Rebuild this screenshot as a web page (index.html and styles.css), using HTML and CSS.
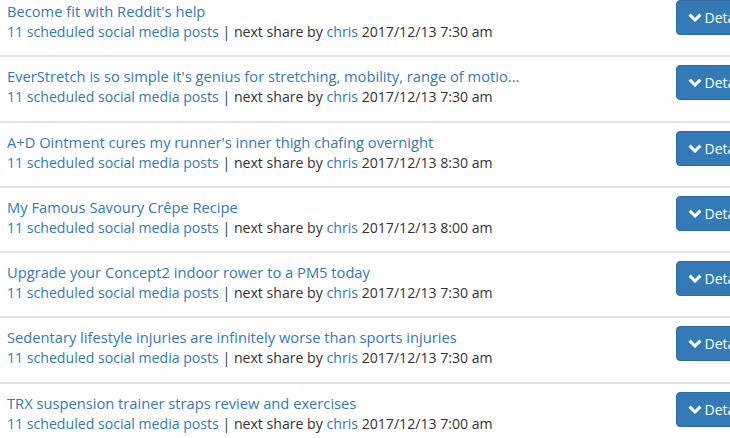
FILE: index.html
```html
<!DOCTYPE html>
<html>
<head>
<meta charset="utf-8">
<link rel="stylesheet" href="styles.css">
</head>
<body>
<div class="list">
  <div class="row">
    <div class="info">
      <a class="title" href="#">Become fit with Reddit's help</a>
      <div class="meta"><a href="#">11 scheduled social media posts</a> | next share by <a href="#">chris</a> 2017/12/13 7:30 am</div>
    </div>
    <button class="btn"><svg class="chev" viewBox="0 0 14 9" width="14" height="9"><path d="M1.6 1.6 L7 7 L12.4 1.6" /></svg>Details</button>
  </div>
  <div class="row">
    <div class="info">
      <a class="title" href="#">EverStretch is so simple it's genius for stretching, mobility, range of motio...</a>
      <div class="meta"><a href="#">11 scheduled social media posts</a> | next share by <a href="#">chris</a> 2017/12/13 7:30 am</div>
    </div>
    <button class="btn"><svg class="chev" viewBox="0 0 14 9" width="14" height="9"><path d="M1.6 1.6 L7 7 L12.4 1.6" /></svg>Details</button>
  </div>
  <div class="row">
    <div class="info">
      <a class="title" href="#">A+D Ointment cures my runner's inner thigh chafing overnight</a>
      <div class="meta"><a href="#">11 scheduled social media posts</a> | next share by <a href="#">chris</a> 2017/12/13 8:30 am</div>
    </div>
    <button class="btn"><svg class="chev" viewBox="0 0 14 9" width="14" height="9"><path d="M1.6 1.6 L7 7 L12.4 1.6" /></svg>Details</button>
  </div>
  <div class="row">
    <div class="info">
      <a class="title" href="#">My Famous Savoury Crêpe Recipe</a>
      <div class="meta"><a href="#">11 scheduled social media posts</a> | next share by <a href="#">chris</a> 2017/12/13 8:00 am</div>
    </div>
    <button class="btn"><svg class="chev" viewBox="0 0 14 9" width="14" height="9"><path d="M1.6 1.6 L7 7 L12.4 1.6" /></svg>Details</button>
  </div>
  <div class="row">
    <div class="info">
      <a class="title" href="#">Upgrade your Concept2 indoor rower to a PM5 today</a>
      <div class="meta"><a href="#">11 scheduled social media posts</a> | next share by <a href="#">chris</a> 2017/12/13 7:30 am</div>
    </div>
    <button class="btn"><svg class="chev" viewBox="0 0 14 9" width="14" height="9"><path d="M1.6 1.6 L7 7 L12.4 1.6" /></svg>Details</button>
  </div>
  <div class="row">
    <div class="info">
      <a class="title" href="#">Sedentary lifestyle injuries are infinitely worse than sports injuries</a>
      <div class="meta"><a href="#">11 scheduled social media posts</a> | next share by <a href="#">chris</a> 2017/12/13 7:30 am</div>
    </div>
    <button class="btn"><svg class="chev" viewBox="0 0 14 9" width="14" height="9"><path d="M1.6 1.6 L7 7 L12.4 1.6" /></svg>Details</button>
  </div>
  <div class="row">
    <div class="info">
      <a class="title" href="#">TRX suspension trainer straps review and exercises</a>
      <div class="meta"><a href="#">11 scheduled social media posts</a> | next share by <a href="#">chris</a> 2017/12/13 7:00 am</div>
    </div>
    <button class="btn"><svg class="chev" viewBox="0 0 14 9" width="14" height="9"><path d="M1.6 1.6 L7 7 L12.4 1.6" /></svg>Details</button>
  </div>
</div>
</body>
</html>
```
FILE: styles.css
```css
html, body {
  margin: 0;
  padding: 0;
  background: #fff;
  overflow: hidden;
}
body {
  font-family: "Open Sans", "Noto Sans", sans-serif;
  font-size: 14px;
  color: #333;
}
.list {
  width: 762px;
  margin-top: -8px;
}
.row {
  display: flex;
  align-items: flex-start;
  justify-content: space-between;
  padding: 8px 0 13.3px 7px;
  border-bottom: 2px solid #e3e3e3;
}
.info {
  line-height: 21px;
  padding-top: 1px;
}
a {
  color: #337ab7;
  text-decoration: none;
}
.title {
  display: block;
  font-size: 14.7px;
  margin-bottom: -1px;
}
.meta {
  font-size: 14.12px;
}
.btn {
  display: flex;
  align-items: center;
  gap: 2px;
  height: 35px;
  padding: 0 12px 0 11px;
  background: #337ab7;
  border: 1px solid #2e6da4;
  border-radius: 4px;
  color: #fff;
  font-family: "Open Sans", "Noto Sans", sans-serif;
  font-size: 14px;
}
.chev {
  display: block;
}
.chev path {
  fill: none;
  stroke: #fff;
  stroke-width: 3;
}
```
